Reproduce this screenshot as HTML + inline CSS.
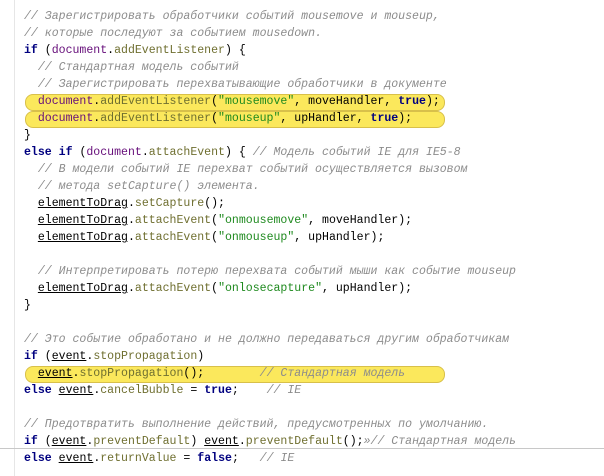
<!DOCTYPE html>
<html><head><meta charset="utf-8"><style>
body{margin:0;width:604px;height:476px;background:#fff;position:relative;overflow:hidden}
.g{position:absolute;left:14px;top:0;width:1px;height:476px;background:#e6e6e6}
.h{position:absolute;left:0;top:448px;width:604px;height:1px;background:#c8c8c8}
.code{position:absolute;left:24px;top:8px;font-family:"Liberation Mono","DejaVu Sans Mono",monospace;font-size:11.55px;line-height:17px;color:#000;z-index:1}
.l{height:17px;position:relative;white-space:pre}
.c{color:#8c8c8c;font-style:italic}
.d{color:#660e7a}
.m{color:#6f6f30}
.s{color:#1f8a1f}
.k{color:#000080;font-weight:bold}
.u{text-decoration:underline}
.hl{position:absolute;left:1px;width:418px;top:1px;height:15px;background:#fbe85c;border:1px solid #d8c04a;border-radius:8px;z-index:-1}
</style></head><body>
<div class="g"></div><div class="h"></div>
<div class="code"><div class="l"><span class="c">// Зарегистрировать обработчики событий mousemove и mouseup,</span></div><div class="l"><span class="c">// которые последуют за событием mousedown.</span></div><div class="l"><span class="k">if</span> (<span class="d">document</span>.<span class="m">addEventListener</span>) {</div><div class="l">  <span class="c">// Стандартная модель событий</span></div><div class="l">  <span class="c">// Зарегистрировать перехватывающие обработчики в документе</span></div><div class="l"><div class="hl"></div>  <span class="d">document</span>.<span class="m">addEventListener</span>(<span class="s">"mousemove"</span>, moveHandler, <span class="k">true</span>);</div><div class="l"><div class="hl"></div>  <span class="d">document</span>.<span class="m">addEventListener</span>(<span class="s">"mouseup"</span>, upHandler, <span class="k">true</span>);</div><div class="l">}</div><div class="l"><span class="k">else if</span> (<span class="d">document</span>.<span class="m">attachEvent</span>) { <span class="c">// Модель событий IE для IE5-8</span></div><div class="l">  <span class="c">// В модели событий IE перехват событий осуществляется вызовом</span></div><div class="l">  <span class="c">// метода setCapture() элемента.</span></div><div class="l">  <span class="u">elementToDrag</span>.<span class="m">setCapture</span>();</div><div class="l">  <span class="u">elementToDrag</span>.<span class="m">attachEvent</span>(<span class="s">"onmousemove"</span>, moveHandler);</div><div class="l">  <span class="u">elementToDrag</span>.<span class="m">attachEvent</span>(<span class="s">"onmouseup"</span>, upHandler);</div><div class="l"> </div><div class="l">  <span class="c">// Интерпретировать потерю перехвата событий мыши как событие mouseup</span></div><div class="l">  <span class="u">elementToDrag</span>.<span class="m">attachEvent</span>(<span class="s">"onlosecapture"</span>, upHandler);</div><div class="l">}</div><div class="l"> </div><div class="l"><span class="c">// Это событие обработано и не должно передаваться другим обработчикам</span></div><div class="l"><span class="k">if</span> (<span class="u">event</span>.<span class="m">stopPropagation</span>)</div><div class="l"><div class="hl"></div>  <span class="u">event</span>.<span class="m">stopPropagation</span>();        <span class="c">// Стандартная модель</span></div><div class="l"><span class="k">else</span> <span class="u">event</span>.<span class="m">cancelBubble</span> = <span class="k">true</span>;    <span class="c">// IE</span></div><div class="l"> </div><div class="l"><span class="c">// Предотвратить выполнение действий, предусмотренных по умолчанию.</span></div><div class="l"><span class="k">if</span> (<span class="u">event</span>.<span class="m">preventDefault</span>) <span class="u">event</span>.<span class="m">preventDefault</span>();<span class="c">»// Стандартная модель</span></div><div class="l"><span class="k">else</span> <span class="u">event</span>.<span class="m">returnValue</span> = <span class="k">false</span>;   <span class="c">// IE</span></div></div>
</body></html>
